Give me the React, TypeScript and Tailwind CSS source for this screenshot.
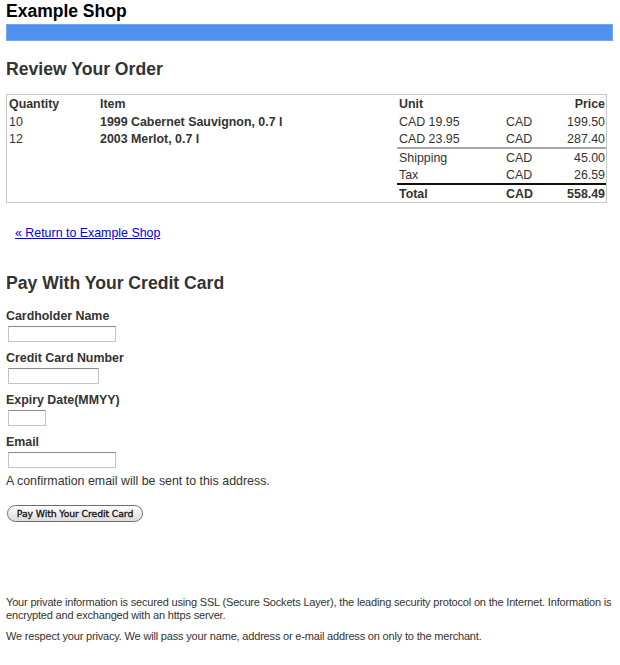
import React from "react";

const cols = "grid grid-cols-[91px_299px_107px_56px_46px]";

function SubRow({ a, b, c, bold, top }: { a: string; b: string; c: string; bold?: boolean; top?: string }) {
  return (
    <div className={cols}>
      <div />
      <div />
      <div className={`col-span-3 grid grid-cols-[107px_56px_46px] ${top ?? ""}`}>
        <div className={`pl-[2px] h-[17px] leading-[18px] ${bold ? "font-bold" : ""}`}>{a}</div>
        <div className={`pl-[2px] h-[17px] leading-[18px] ${bold ? "font-bold" : ""}`}>{b}</div>
        <div className={`pr-[1px] text-right h-[17px] leading-[18px] ${bold ? "font-bold" : ""}`}>{c}</div>
      </div>
    </div>
  );
}

function Field({ label, width }: { label: string; width: string }) {
  return (
    <div className="pb-[9px]">
      <div className="font-bold text-[12.4px] leading-[14px]">{label}</div>
      <div className={`mt-[3px] ml-[2px] h-[16px] ${width} border border-[#c4c4c4] border-t-[#8a8a8a] bg-white`} />
    </div>
  );
}

export default function App() {
  return (
    <div
      className="px-[6px] text-[#333] bg-white min-h-[665px]"
      style={{ fontFamily: '"Liberation Sans", Arial, sans-serif' }}
    >
      <h1 className="text-[17.5px] leading-[23px] font-bold text-black">Example Shop</h1>
      <div className="mt-[1px] h-[17px] w-[607px] bg-[#5090ee] border border-[#72a5f3]" />

      <h2 className="mt-[17px] text-[17.6px] leading-[22px] font-bold text-[#333]">Review Your Order</h2>

      <div className="mt-[14px] w-[601px] border border-[#c8c8c8] text-[12.4px]">
        <div className={`${cols} font-bold h-[18px] leading-[18px]`}>
          <div className="pl-[2px]">Quantity</div>
          <div className="pl-[2px]">Item</div>
          <div className="pl-[2px]">Unit</div>
          <div />
          <div className="pr-[1px] text-right">Price</div>
        </div>
        <div className={`${cols} h-[17px] leading-[18px]`}>
          <div className="pl-[2px]">10</div>
          <div className="pl-[2px] font-bold">1999 Cabernet Sauvignon, 0.7 l</div>
          <div className="pl-[2px]">CAD 19.95</div>
          <div className="pl-[2px]">CAD</div>
          <div className="pr-[1px] text-right">199.50</div>
        </div>
        <div className={`${cols} h-[17px] leading-[18px]`}>
          <div className="pl-[2px]">12</div>
          <div className="pl-[2px] font-bold">2003 Merlot, 0.7 l</div>
          <div className="pl-[2px]">CAD 23.95</div>
          <div className="pl-[2px]">CAD</div>
          <div className="pr-[1px] text-right">287.40</div>
        </div>
        <SubRow a="Shipping" b="CAD" c="45.00" top="border-t-2 border-[#a8a8a8]" />
        <SubRow a="Tax" b="CAD" c="26.59" />
        <SubRow a="Total" b="CAD" c="558.49" bold top="border-t-2 border-[#111]" />
      </div>

      <div className="mt-[23px] pl-[9px] text-[12.4px] leading-[14px]">
        <a href="#" className="text-[#0000ee] underline">« Return to Example Shop</a>
      </div>

      <h2 className="mt-[32px] text-[17.6px] leading-[22px] font-bold text-[#333]">Pay With Your Credit Card</h2>

      <div className="mt-[15px]">
        <Field label="Cardholder Name" width="w-[108px]" />
        <Field label="Credit Card Number" width="w-[91px]" />
        <Field label="Expiry Date(MMYY)" width="w-[38px]" />
        <Field label="Email" width="w-[108px]" />
      </div>

      <div className="-mt-[3px] text-[12.4px] leading-[14px]">A confirmation email will be sent to this address.</div>

      <div className="mt-[17px] pl-[1px] flex">
        <button
          className="h-[17px] w-[136px] whitespace-nowrap rounded-full border border-[#6e6e6e] bg-gradient-to-b from-white to-[#dcdcdc] text-[9.3px] leading-[15px] text-[#111] font-normal tracking-[-0.1px] [-webkit-text-stroke:0.3px_#111]"
          style={{ fontFamily: '"DejaVu Sans", sans-serif' }}
        >
          Pay With Your Credit Card
        </button>
      </div>

      <p className="mt-[74px] text-[11px] leading-[13px] tracking-[-0.18px]">
        Your private information is secured using SSL (Secure Sockets Layer), the leading security protocol on the Internet. Information is encrypted and exchanged with an https server.
      </p>
      <p className="mt-[8px] text-[11px] leading-[13px] tracking-[-0.18px]">
        We respect your privacy. We will pass your name, address or e-mail address on only to the merchant.
      </p>
    </div>
  );
}
